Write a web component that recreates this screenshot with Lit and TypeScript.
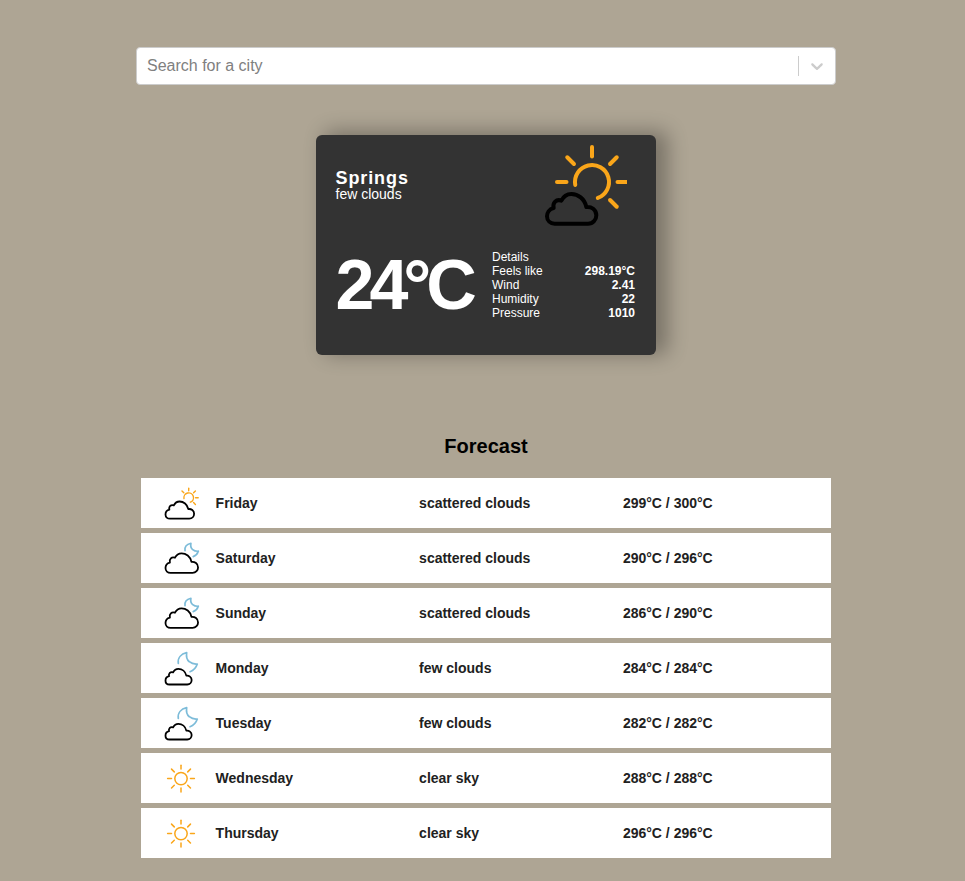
import { LitElement, css, html, svg } from 'lit';
import { customElement } from 'lit/decorators.js';

const ORANGE = '#faa61a';
const BLUE = '#7dbcd9';

const CLOUD = 'M45 247H145C160 247 170 235 170 222C170 205 155 195 140 197C135 172 115 158 95 158C80 158 70 168 65 178C50 172 38 185 42 200C28 203 22 215 22 225C22 238 32 247 45 247Z';
const MOON = 'M17.3 20.3C16.5 15 20 11 25.7 9.7C25 14 26 17 28.3 18.7C30.5 20.5 33 21.3 36.3 21C35 25 32.5 27.5 29 28.7';

// cloud path is drawn in a 3x crop space, so place it with a transform
const cloud = (x: number, y: number, w: number, sw: number) => {
	const k = w / 150;
	return svg`<path d=${CLOUD} transform="translate(${x - 22 * k} ${y - 158 * k}) scale(${k})" fill="none" stroke="#000" stroke-width=${sw / k} stroke-linejoin="round" />`;
};

const rays = (cx: number, cy: number, inner: number, outer: number, skip: number[], sw: number) =>
	[0, 45, 90, 135, 180, 225, 270, 315]
		.filter((a) => !skip.includes(a))
		.map((a) => {
			const r = (a * Math.PI) / 180;
			return svg`<line x1=${cx + Math.cos(r) * inner} y1=${cy + Math.sin(r) * inner} x2=${cx + Math.cos(r) * outer} y2=${cy + Math.sin(r) * outer} stroke=${ORANGE} stroke-width=${sw} stroke-linecap="round" />`;
		});

const sun = (cx: number, cy: number, r: number, inner: number, outer: number, sw: number) => svg`
	<circle cx=${cx} cy=${cy} r=${r} fill="none" stroke=${ORANGE} stroke-width=${sw} />
	${rays(cx, cy, inner, outer, [], sw)}
`;

const partSun = (cx: number, cy: number, r: number, inner: number, outer: number, sw: number, skip: number[]) => {
	const a1 = (170 * Math.PI) / 180;
	const a2 = (70 * Math.PI) / 180;
	return svg`
		<path d="M${cx + Math.cos(a1) * r} ${cy + Math.sin(a1) * r}A${r} ${r} 0 1 1 ${cx + Math.cos(a2) * r} ${cy + Math.sin(a2) * r}" fill="none" stroke=${ORANGE} stroke-width=${sw} stroke-linecap="round" />
		${rays(cx, cy, inner, outer, skip, sw)}
	`;
};

const moon = (tx: number, ty: number, k: number) => svg`
	<path d=${MOON} transform="translate(${tx} ${ty}) scale(${k})" fill="none" stroke=${BLUE} stroke-width=${1.7 / k} stroke-linecap="round" stroke-linejoin="round" />
`;

const ICONS: Record<string, unknown> = {
	day: svg`${partSun(27.7, 19.7, 4.8, 6.9, 9.5, 1.4, [90, 135, 180])}${cloud(4.5, 23.5, 29, 1.8)}`,
	night: svg`${moon(11.9, 3.5, 0.7)}${cloud(4.5, 20.3, 33, 1.8)}`,
	few: svg`${moon(0, 0, 1)}${cloud(4.5, 25.8, 26.5, 1.8)}`,
	clear: svg`${sun(20, 25.6, 6.2, 9.5, 13.4, 1.5)}`,
};

const FORECAST = [
	{ day: 'Friday', desc: 'scattered clouds', temp: '299°C / 300°C', icon: 'day' },
	{ day: 'Saturday', desc: 'scattered clouds', temp: '290°C / 296°C', icon: 'night' },
	{ day: 'Sunday', desc: 'scattered clouds', temp: '286°C / 290°C', icon: 'night' },
	{ day: 'Monday', desc: 'few clouds', temp: '284°C / 284°C', icon: 'few' },
	{ day: 'Tuesday', desc: 'few clouds', temp: '282°C / 282°C', icon: 'few' },
	{ day: 'Wednesday', desc: 'clear sky', temp: '288°C / 288°C', icon: 'clear' },
	{ day: 'Thursday', desc: 'clear sky', temp: '296°C / 296°C', icon: 'clear' },
];

const DETAILS = [
	['Feels like', '298.19°C'],
	['Wind', '2.41'],
	['Humidity', '22'],
	['Pressure', '1010'],
];

@customElement('app-root')
export class AppRoot extends LitElement {
	static styles = css`
		:host {
			display: block;
			min-height: 881px;
			background: #aea594;
			font-family: 'Liberation Sans', Arial, sans-serif;
			overflow: hidden;
		}
		.page {
			width: 700px;
			margin-left: 136px;
			padding-top: 47px;
		}
		.search {
			height: 38px;
			box-sizing: border-box;
			display: flex;
			align-items: center;
			background: #fff;
			border: 1px solid #ccc;
			border-radius: 4px;
			padding-left: 10px;
			color: #808080;
			font-size: 16px;
		}
		.search span {
			flex: 1;
		}
		.sep {
			width: 1px;
			height: 20px;
			background: #ccc;
		}
		.chev {
			width: 36px;
			display: flex;
			justify-content: center;
		}
		.card {
			width: 340px;
			height: 220px;
			box-sizing: border-box;
			margin: 50px auto 0;
			padding: 0 20px 0 19.5px;
			background: #333;
			color: #fff;
			border-radius: 6px;
			box-shadow: 10px -2px 20px 2px rgba(0, 0, 0, 0.3);
			display: flex;
			flex-direction: column;
		}
		.top {
			display: flex;
			justify-content: space-between;
			height: 100px;
		}
		.city {
			margin-top: 34px;
			font-size: 18px;
			font-weight: 700;
			line-height: 18px;
			letter-spacing: 0.9px;
		}
		.desc {
			font-size: 14px;
			line-height: 14px;
		}
		.big-icon {
			display: block;
			margin-right: 9px;
		}
		.bottom {
			display: flex;
			align-items: center;
			margin-top: 15px;
		}
		.temp {
			width: 156.5px;
			font-size: 70px;
			font-weight: 700;
			letter-spacing: -5px;
			line-height: 70px;
		}
		.details {
			flex: 1;
			font-size: 12px;
			line-height: 14px;
			padding-right: 1px;
		}
		.line {
			display: flex;
			justify-content: space-between;
		}
		.line b {
			font-weight: 600;
		}
		h2 {
			margin: 80px 0 20px;
			font-size: 20px;
			line-height: 23px;
			font-weight: 700;
			color: #000;
			text-align: center;
		}
		.rows {
			display: flex;
			flex-direction: column;
			gap: 5px;
			margin: 0 5px;
		}
		.row {
			height: 50px;
			box-sizing: border-box;
			padding-left: 20px;
			background: #fff;
			color: #212121;
			font-size: 14px;
			font-weight: 700;
			display: grid;
			grid-template-columns: 54.6px 203.5px 203.8px 1fr;
			align-items: center;
		}
		.row svg {
			display: block;
		}
	`;

	render() {
		return html`<div class="page">
			<div class="search">
				<span>Search for a city</span>
				<i class="sep"></i>
				<div class="chev">
					<svg width="20" height="20" viewBox="0 0 20 20">
						<path fill="#ccc" d="M4.516 7.548c.436-.446 1.043-.481 1.576 0L10 11.295l3.908-3.747c.533-.481 1.141-.446 1.574 0 .436.445.408 1.197 0 1.615-.406.418-4.695 4.502-4.695 4.502a1.095 1.095 0 0 1-1.576 0S4.924 9.581 4.516 9.163s-.436-1.17 0-1.615z" />
					</svg>
				</div>
			</div>

			<div class="card">
				<div class="top">
					<div>
						<div class="city">Springs</div>
						<div class="desc">few clouds</div>
					</div>
					<svg class="big-icon" width="90" height="100" viewBox="0 0 90 100">
						${partSun(55, 47, 17, 25.5, 35, 4, [90, 135])}${cloud(10, 59, 50, 4)}
					</svg>
				</div>
				<div class="bottom">
					<div class="temp">24°C</div>
					<div class="details">
						<div>Details</div>
						${DETAILS.map(([k, v]) => html`<div class="line"><span>${k}</span><b>${v}</b></div>`)}
					</div>
				</div>
			</div>

			<h2>Forecast</h2>
			<div class="rows">
				${FORECAST.map(
					(f) => html`<div class="row">
						<svg width="50" height="50" viewBox="0 0 50 50">${ICONS[f.icon]}</svg>
						<span>${f.day}</span>
						<span>${f.desc}</span>
						<span>${f.temp}</span>
					</div>`
				)}
			</div>
		</div>`;
	}
}
